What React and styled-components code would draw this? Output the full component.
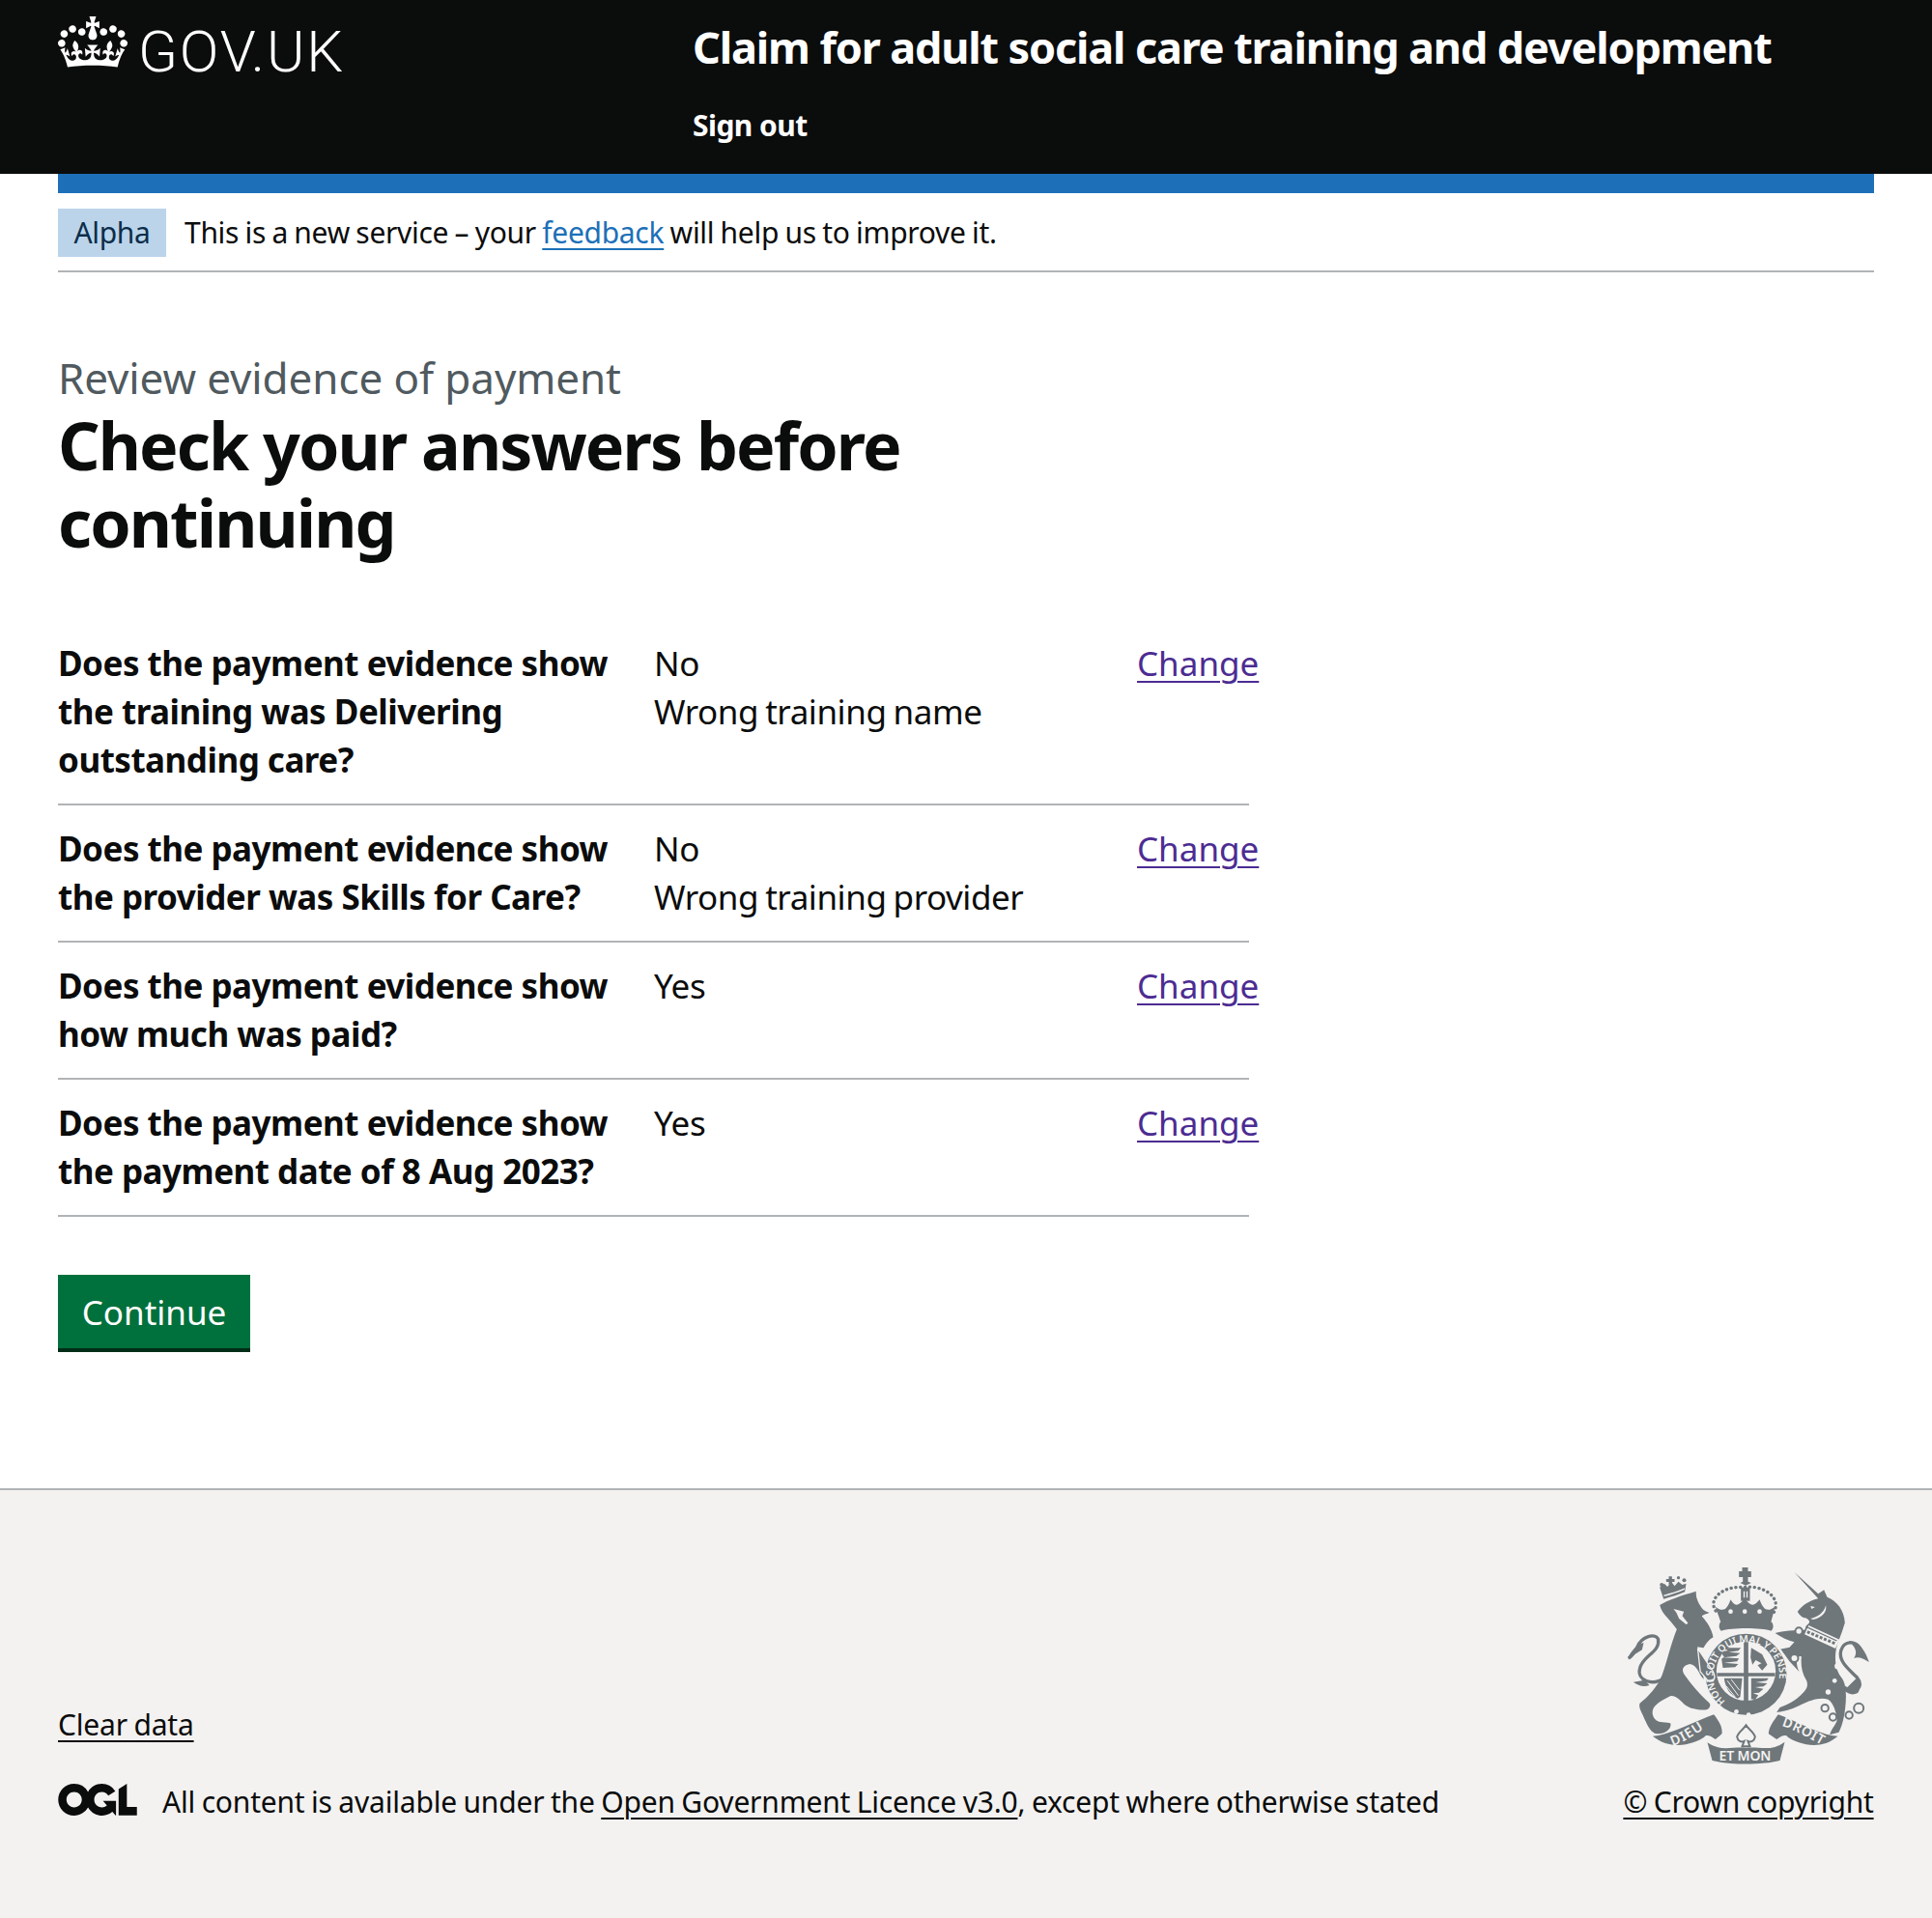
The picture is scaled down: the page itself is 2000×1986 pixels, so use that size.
import styled, { createGlobalStyle } from "styled-components";

const Global = createGlobalStyle`
  html, body { margin: 0; padding: 0; background: #fff; }
  body {
    font-family: "Noto Sans", Arial, sans-serif;
    color: #0b0c0c;
    -webkit-font-smoothing: antialiased;
  }
  * { box-sizing: border-box; }
`;

const Header = styled.header`
  background: #0b0c0c;
  height: 180px;
  padding: 0 60px;
  display: flex;
`;

const Logo = styled.a`
  width: 657px;
  height: 80px;
  padding-top: 17px;
  display: flex;
  gap: 11px;
  color: #fff;
  text-decoration: none;
`;

const LogoText = styled.span`
  padding-top: 2px;
  font-family: Roboto, sans-serif;
  font-weight: 300;
  font-size: 60px;
  line-height: 70px;
  letter-spacing: 1.8px;
`;

const ServiceCol = styled.div`
  padding-top: 20px;
  display: flex;
  flex-direction: column;
  gap: 30px;
`;

const ServiceName = styled.a`
  color: #fff;
  font-weight: 700;
  font-size: 45px;
  line-height: 58px;
  letter-spacing: -1.15px;
  text-decoration: none;
  height: 60px;
`;

const SignOut = styled.a`
  color: #fff;
  font-weight: 700;
  font-size: 30px;
  line-height: 40px;
  letter-spacing: -0.55px;
  text-decoration: none;
`;

const Container = styled.div`
  margin: 0 60px;
`;

const BlueBar = styled.div`
  height: 20px;
  background: #1d70b8;
`;

const Phase = styled.div`
  height: 82px;
  padding-top: 16px;
  border-bottom: 2px solid #b1b4b6;
  display: flex;
  align-items: flex-start;
  gap: 19px;
  font-size: 30px;
  line-height: 50px;
  letter-spacing: -0.3px;
  word-spacing: -1.1px;
`;

const Tag = styled.strong`
  width: 112px;
  height: 50px;
  background: #bbd4ea;
  color: #0c2d4a;
  font-weight: 400;
  text-align: center;
`;

const Link = styled.a`
  color: ${(p) => p.$color || "#0b0c0c"};
  text-decoration: underline;
  text-decoration-thickness: 2px;
  text-underline-offset: 5px;
`;

const Main = styled.main`
  padding-top: 80px;
  height: 1259px;
`;

const Caption = styled.span`
  display: block;
  color: #505a5f;
  font-size: 44px;
  line-height: 58px;
  height: 60px;
  letter-spacing: -0.1px;
`;

const Title = styled.h1`
  margin: -1px 0 61px;
  width: 1000px;
  font-size: 68px;
  line-height: 80px;
  font-weight: 700;
  letter-spacing: -1.9px;
`;

const Summary = styled.dl`
  margin: 0;
  width: 1233px;
`;

const Row = styled.div`
  display: grid;
  grid-template-columns: 617px 500px 116px;
  padding: 20px 0;
  border-bottom: 2px solid #b1b4b6;
  font-size: 35px;
  line-height: 50px;
`;

const Key = styled.dt`
  font-weight: 700;
  letter-spacing: -0.5px;
  padding-right: 30px;
`;

const Value = styled.dd`
  margin: 0;
  letter-spacing: -0.45px;
  word-spacing: -1.5px;
`;

const Action = styled.dd`
  margin: 0;
  white-space: nowrap;
`;

const Button = styled.button`
  display: block;
  margin-top: 60px;
  width: 199px;
  height: 76px;
  border: 0;
  padding: 0;
  background: #00703c;
  box-shadow: 0 4px 0 #002d18;
  color: #fff;
  font: inherit;
  font-size: 35px;
`;

const Footer = styled.footer`
  background: #f3f2f1;
  border-top: 2px solid #b1b4b6;
  padding: 79px 60px 100px;
  display: flex;
  justify-content: space-between;
  align-items: flex-end;
  font-size: 30px;
  line-height: 40px;
  letter-spacing: -0.2px;
  word-spacing: -1px;
`;

const Meta = styled.div`
  display: flex;
  flex-direction: column;
  gap: 40px;
`;

const Licence = styled.div`
  display: flex;
  align-items: center;
  gap: 26px;
`;

const OglMark = styled.svg`
  width: 82px;
  height: 33px;
  margin-bottom: 6px;
  flex-shrink: 0;
`;

const Copyright = styled.div`
  display: flex;
  flex-direction: column;
  align-items: center;
  gap: 19px;
  width: 260px;
  white-space: nowrap;
`;

const rows = [
  ["Does the payment evidence show the training was Delivering outstanding care?", ["No", "Wrong training name"]],
  ["Does the payment evidence show the provider was Skills for Care?", ["No", "Wrong training provider"]],
  ["Does the payment evidence show how much was paid?", ["Yes"]],
  ["Does the payment evidence show the payment date of 8 Aug 2023?", ["Yes"]],
];

function Crown() {
  return (
    <svg viewBox="0 0 132 97" width="72" height="53" aria-hidden="true">
      <path
        fill="currentColor"
        fillRule="evenodd"
        d="M25 30.2c3.5 1.5 7.7-.2 9.1-3.7 1.5-3.6-.2-7.8-3.9-9.2-3.6-1.4-7.6.3-9.1 3.9-1.4 3.5.3 7.5 3.9 9zM9 39.5c3.6 1.5 7.8-.2 9.2-3.7 1.5-3.6-.2-7.8-3.9-9.1-3.6-1.5-7.6.2-9.1 3.8-1.4 3.5.3 7.5 3.8 9zM4.4 57.2c3.5 1.5 7.7-.2 9.1-3.8 1.5-3.6-.2-7.7-3.9-9.1-3.5-1.5-7.6.3-9.1 3.8-1.4 3.5.3 7.6 3.9 9.1zm38.3-21.4c3.5 1.5 7.7-.2 9.1-3.8 1.5-3.6-.2-7.7-3.9-9.1-3.6-1.5-7.6.3-9.1 3.8-1.3 3.6.4 7.7 3.9 9.1zm64.4-5.6c-3.6 1.5-7.8-.2-9.1-3.7-1.5-3.6.2-7.8 3.8-9.2 3.6-1.4 7.7.3 9.2 3.9 1.3 3.5-.4 7.5-3.9 9zm15.9 9.3c-3.6 1.5-7.7-.2-9.1-3.7-1.5-3.6.2-7.8 3.7-9.1 3.6-1.5 7.7.2 9.2 3.8 1.5 3.5-.3 7.5-3.8 9zm4.7 17.7c-3.6 1.5-7.8-.2-9.2-3.8-1.5-3.6.2-7.7 3.9-9.1 3.6-1.5 7.7.3 9.2 3.8 1.3 3.5-.4 7.6-3.9 9.1zM89.3 35.8c-3.6 1.5-7.8-.2-9.2-3.8-1.4-3.6.2-7.7 3.9-9.1 3.6-1.5 7.7.3 9.2 3.8 1.4 3.6-.3 7.7-3.9 9.1zM69.7 17.7l8.9 4.7V9.3l-8.9 2.8c-.2-.3-.5-.6-.9-.9L72.4 0H59.6l3.5 11.2c-.3.3-.6.5-.9.9l-8.8-2.8v13.1l8.8-4.7c.3.3.6.7.9.9l-5 15.4v.1c-.2.8-.4 1.6-.4 2.4 0 4.1 3.1 7.5 7 8.1h.2c.3 0 .7.1 1 .1.4 0 .7 0 1-.1h.2c4-.6 7.1-4.1 7.1-8.1 0-.8-.1-1.7-.4-2.4V34l-5.1-15.4c.4-.2.7-.6 1-.9zM66 92.8c16.9 0 32.8 1.1 47.1 3.2 4-16.9 8.9-26.7 14-33.5l-9.6-3.4c1 4.9 1.1 7.2 0 10.2-1.5-1.4-3-4.3-4.2-8.7L108.6 76c2.8-2 5-3.2 7.5-3.3-4.4 9.4-10 11.9-13.6 11.2-4.3-.8-6.3-4.6-5.6-7.9 1-4.7 5.7-5.9 8-.5 4.3-8.7-3-11.4-7.6-8.8 7.1-7.2 7.9-13.5 2.1-21.1-8 6.1-8.1 12.3-4.5 20.8-4.7-5.4-12.1-2.5-9.5 6.2 3.4-5.2 7.9-2 7.2 3.1-.6 4.3-6.4 7.8-13.5 7.2-10.3-.9-10.9-8-11.2-13.8 2.5-.5 7.1 1.8 11 7.3L80.2 60c-4.1 4.4-8 5.3-12.3 5.4 1.4-4.4 8-11.6 8-11.6H55.5s6.4 7.2 7.9 11.6c-4.2-.1-8-1-12.3-5.4l1.4 16.4c3.9-5.5 8.5-7.7 10.9-7.3-.3 5.8-.9 12.8-11.1 13.8-7.2.6-12.9-2.9-13.5-7.2-.7-5 3.8-8.3 7.1-3.1 2.7-8.7-4.6-11.6-9.4-6.2 3.7-8.5 3.6-14.7-4.6-20.8-5.8 7.6-5 13.9 2.2 21.1-4.7-2.6-11.9.1-7.7 8.8 2.3-5.5 7.1-4.2 8.1.5.7 3.3-1.3 7.1-5.7 7.9-3.5.7-9-1.8-13.5-11.2 2.5.1 4.7 1.3 7.5 3.3l-4.7-15.4c-1.2 4.4-2.7 7.2-4.3 8.7-1.1-3-.9-5.3 0-10.2l-9.5 3.4c5 6.9 9.9 16.7 14 33.5 14.8-2.1 30.8-3.2 47.7-3.2z"
      />
    </svg>
  );
}

function OglLogo() {
  return (
    <OglMark viewBox="0 0 483.2 195.7" aria-hidden="true">
      <path
        fill="#0b0c0c"
        d="M421.5 142.8V.1l-50.7 32.3v161.1h112.4v-50.7zm-122.3-9.6A47.12 47.12 0 0 1 221 97.8c0-26 21.1-47.1 47.1-47.1 16.7 0 31.4 8.7 39.7 21.8l42.7-27.2A97.63 97.63 0 0 0 268.1 0c-36.5 0-68.3 20.1-85.1 49.7A98 98 0 0 0 97.8 0C43.9 0 0 43.9 0 97.8s43.9 97.8 97.8 97.8c36.5 0 68.3-20.1 85.1-49.7a97.76 97.76 0 0 0 149.6 25.4l19.4 22.2h3v-87.8h-80l24.3 27.5zM97.8 145c-26 0-47.1-21.1-47.1-47.1s21.1-47.1 47.1-47.1 47.2 21 47.2 47S123.8 145 97.8 145"
      />
    </OglMark>
  );
}

function Crest() {
  const ink = "#6f777b";
  const bg = "#f3f2f1";
  const labelFont = "Noto Sans, sans-serif";
  return (
    <svg viewBox="70 65 755 615" width="252" height="205" aria-hidden="true">
      <defs>
        <path id="garter" d="M376 484A103 103 0 1 1 512 478" />
        <path id="dieu" d="M212 622C250 610 285 585 330 556" />
        <path id="droit" d="M550 560C590 572 635 598 690 628" />
      </defs>
      {/* lion */}
      <path
        fill={ink}
        d="M172 185C195 170 240 155 285 142c-2 18 5 33 15 48 10 15 18 15 26 18-11 6-21 6-23 12 15 15 32 42 35 65-13 7-23 20-30 33l-20-3c10 20 22 45 37 70 10 15 15 30 10 40-10 5-25-5-35-20-10-20-18-35-35-37-20 4-27 17-17 32 14 20 47 62 77 88 7 7 3 17-7 22-18 2-48 0-68-15-15-15-35-35-50-25-30 15-55 30-50 55 8 30 30 20 55 27 5 13-10 33-40 33-20 0-30-25-40-45-7-20-20-35-15-50 25-20 55-50 70-90 15-40 25-90 45-140-25-35-45-45-53-75z"
      />
      <path fill={bg} d="M215 197l32 8-5 14 18 22-6 4-22-18-8-18z" />
      <path
        fill="none"
        stroke={ink}
        strokeWidth="10"
        d="M185 412c-35 25-85 8-75-30 8-40 65-50 57-92-10-18-50-10-65 25-8 18-18 30-27 35"
      />
      <path fill={ink} d="M72 352c10-25 30-45 50-50l-5 22zM90 424c15 10 30 18 50 10l-15-16z" />
      {/* lion's crown */}
      <path fill={ink} d="M172 130l12 36c22-6 44-12 66-22l4-26-12 4-12-10-12 14-10-14-12 16-10-10z" />
      <path fill={bg} d="M184 154c22-6 44-12 66-22l-1 5c-22 10-44 16-63 21z" />
      <path fill={ink} d="M200 96h10v8h8v9h-8v8h-10v-8h-8v-9h8z" />
      <g fill={ink}>
        <circle cx="178" cy="122" r="6" />
        <circle cx="248" cy="108" r="6" />
        <circle cx="230" cy="100" r="5" />
      </g>
      {/* unicorn */}
      <path
        fill={ink}
        d="M590 83L664 150L682 138L692 160C722 172 745 200 747 240L738 268L724 305C712 345 716 385 738 412C752 432 752 470 748 505C745 535 738 560 728 580L700 588C705 570 716 560 722 545C722 520 712 490 695 478C670 470 640 480 610 495C590 505 565 515 535 518L545 503C570 495 595 480 610 465C625 450 635 440 628 420C612 395 610 370 612 345C600 340 590 360 605 392L575 360C565 345 555 330 545 322L575 316L590 300C570 295 550 285 530 272C555 265 590 262 622 262L628 248C640 240 640 232 625 225C615 225 605 215 600 205C615 185 640 170 664 165Z"
      />
      <path fill={bg} d="M640 188l14 3-10 6zM688 186c4 22-14 40-40 44l-8-3c22-4 42-18 48-41z" />
      <path fill="none" stroke={bg} strokeWidth="30" d="M628 262l96 44" />
      <path fill="none" stroke={ink} strokeWidth="9" strokeDasharray="9 5" d="M630 268l90 38" />
      <path fill="none" stroke={ink} strokeWidth="4" d="M626 252l96 44" />
      <path
        fill="none"
        stroke={ink}
        strokeWidth="10"
        d="M745 440C775 465 810 440 785 410C760 385 725 360 735 325C745 295 780 295 795 320"
      />
      <path fill={ink} d="M758 297C790 293 812 330 822 362C802 350 790 345 775 350C790 330 775 310 758 297Z" />
      <path fill={ink} d="M785 410c10 15 12 35 2 48-15 8-30 5-42-8z" />
      <g fill="none" stroke={ink} strokeWidth="6">
        <circle cx="685" cy="505" r="11" />
        <circle cx="710" cy="533" r="11" />
        <circle cx="760" cy="527" r="11" />
        <circle cx="790" cy="505" r="15" />
      </g>
      <circle cx="604" cy="266" r="11" fill={bg} stroke={ink} strokeWidth="6" />
      <circle cx="590" cy="350" r="12" fill={bg} stroke={ink} strokeWidth="6" />
      <g fill={bg}>
        <circle cx="725" cy="375" r="10" />
        <circle cx="695" cy="455" r="8" />
        <circle cx="715" cy="420" r="7" />
      </g>
      {/* garter with shield */}
      <circle cx="440" cy="400" r="133" fill={bg} />
      <circle cx="440" cy="400" r="126" fill={ink} />
      <circle cx="440" cy="390" r="92" fill={bg} />
      <path fill={ink} d="M433 298h14v205h-14zM350 396h180v10H350z" />
      <g fill={ink}>
        <path d="M372 318h52l-8 9-30 4 36 3-12 9-40 5 48 3-6 9-40 4 44 4-10 10-38 2-4-28 8-6-6-8z" />
        <path d="M456 318l34 20 16 32-16 18-14-16 12-6-18-10-10 14-6-22z" />
        <path d="M372 412h56l-6 58-8 5c-22-12-38-30-42-63z" />
        <path d="M456 412h54l-6 8-34 5 36 3-12 10-26 2 26 5-14 12-18 2 16 6-10 14-12-2z" />
      </g>
      <g fill="none" stroke={bg} strokeWidth="3">
        <path d="M382 420l34 46M394 416l26 34M378 436l28 34" />
      </g>
      <path fill={ink} d="M290 320L338 392C348 412 338 428 322 420L298 392Z" stroke={bg} strokeWidth="4" />
      <text fill={bg} fontFamily={labelFont} fontSize="31" fontWeight="600">
        <textPath href="#garter">HONI SOIT QUI MAL Y PENSE</textPath>
      </text>
      <circle cx="410" cy="516" r="7" fill={bg} />
      <circle cx="448" cy="526" r="7" fill={bg} />
      {/* royal crown */}
      <path fill={ink} d="M362 240L345 190C365 205 380 205 392 168C405 190 415 190 436 165C455 190 465 190 482 168C495 205 510 205 530 190L517 240Z" />
      <g fill={bg}>
        <circle cx="392" cy="205" r="7" />
        <circle cx="436" cy="205" r="7" />
        <circle cx="482" cy="205" r="7" />
      </g>
      <path fill={ink} d="M360 238c50-14 110-14 160 0 6 8 6 20-2 27-30-11-125-11-155 0-8-7-8-19-3-27z" />
      <g fill="none" stroke={ink} strokeWidth="10" strokeDasharray="0.5 14" strokeLinecap="round">
        <path d="M346 203C320 165 370 125 430 130C490 120 555 160 525 210" />
      </g>
      <path fill={ink} d="M424 130h28v42h-28z" />
      <path fill={bg} d="M432 142h4v20h-4zM441 142h4v20h-4z" />
      <path fill={ink} d="M428 68h18v12h10v18h-10v14l10 4-17 8-17-8 8-4V98h-12V80h10z" />
      {/* scroll */}
      <path fill={ink} d="M150 592C200 590 270 550 340 525C356 545 368 565 365 585L345 602C330 590 315 585 310 595C280 615 210 640 150 592Z" />
      <path fill={ink} d="M725 592C670 640 600 615 570 595C565 585 550 590 535 602L510 585C510 565 525 545 540 525C610 550 670 590 725 592Z" />
      <path fill={ink} d="M320 612C360 640 390 625 440 628C490 625 520 640 560 610L545 668C490 682 390 682 335 668Z" />
      <path fill={bg} stroke={ink} strokeWidth="6" d="M440 558c10 15 24 22 28 36-2 14-14 18-22 14l6 16h-24l6-16c-8 4-20 0-22-14 4-14 18-21 28-36z" />
      <text fill={bg} fontFamily={labelFont} fontSize="42" fontWeight="600" letterSpacing="3">
        <textPath href="#dieu">DIEU</textPath>
      </text>
      <text fill={bg} fontFamily={labelFont} fontSize="42" fontWeight="600" letterSpacing="2">
        <textPath href="#droit">DROIT</textPath>
      </text>
      <text x="437" y="668" textAnchor="middle" fill={bg} fontFamily={labelFont} fontSize="42" fontWeight="600">
        ET MON
      </text>
    </svg>
  );
}

export default function App() {
  return (
    <>
      <Global />
      <Header>
        <Logo href="#">
          <Crown />
          <LogoText>GOV.UK</LogoText>
        </Logo>
        <ServiceCol>
          <ServiceName href="#">Claim for adult social care training and development</ServiceName>
          <SignOut href="#">Sign out</SignOut>
        </ServiceCol>
      </Header>
      <Container>
        <BlueBar />
        <Phase>
          <Tag>Alpha</Tag>
          <span>
            This is a new service – your <Link href="#" $color="#1d70b8">feedback</Link> will help us to improve it.
          </span>
        </Phase>
        <Main>
          <Caption>Review evidence of payment</Caption>
          <Title>Check your answers before continuing</Title>
          <Summary>
            {rows.map(([key, values]) => (
              <Row key={key}>
                <Key>{key}</Key>
                <Value>
                  {values.map((v) => (
                    <div key={v}>{v}</div>
                  ))}
                </Value>
                <Action>
                  <Link href="#" $color="#4c2c92">Change</Link>
                </Action>
              </Row>
            ))}
          </Summary>
          <Button>Continue</Button>
        </Main>
      </Container>
      <Footer>
        <Meta>
          <div>
            <Link href="#">Clear data</Link>
          </div>
          <Licence>
            <OglLogo />
            <span>
              All content is available under the <Link href="#">Open Government Licence v3.0</Link>, except where otherwise stated
            </span>
          </Licence>
        </Meta>
        <Copyright>
          <Crest />
          <Link href="#">© Crown copyright</Link>
        </Copyright>
      </Footer>
    </>
  );
}
